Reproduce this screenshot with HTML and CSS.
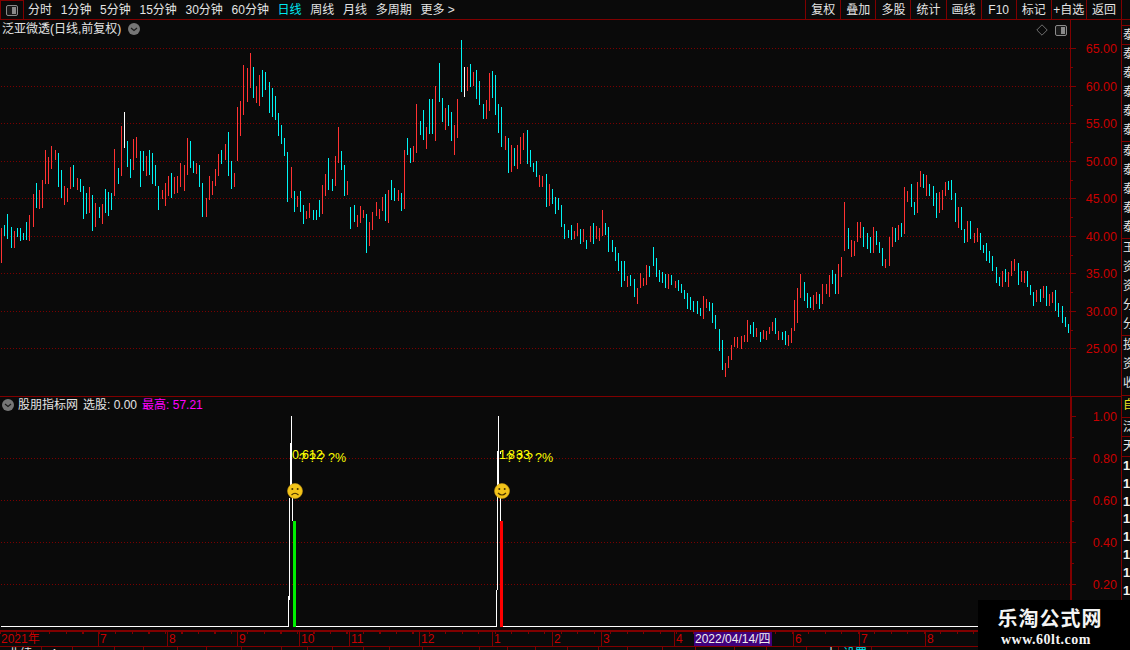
FILE: index.html
```html
<!DOCTYPE html>
<html lang="zh">
<head>
<meta charset="utf-8">
<title>泛亚微透</title>
<link rel="stylesheet" href="styles.css">
</head>
<body>
<div class="app">
  <header class="toolbar">
    <div class="layout-btn">
      <svg class="icon-panel" viewBox="0 0 12 11"><rect x="0.5" y="0.5" width="11" height="10" rx="1.5" class="panel-frame"/><rect x="6" y="2" width="4" height="7" class="panel-fill"/></svg>
    </div>
    <nav class="periods">
      <span>分时</span><span>1分钟</span><span>5分钟</span><span>15分钟</span><span>30分钟</span><span>60分钟</span><span class="active">日线</span><span>周线</span><span>月线</span><span>多周期</span><span>更多 &gt;</span>
    </nav>
    <nav class="actions">
      <span>复权</span><span>叠加</span><span>多股</span><span>统计</span><span>画线</span><span>F10</span><span>标记</span><span>+自选</span><span>返回</span>
    </nav>
    <div class="toolbar-end"></div>
  </header>

  <div class="workspace">
    <main class="charts">
      <section class="pane price-pane">
        <div class="pane-title title-price">
          <span>泛亚微透(日线,前复权)</span>
          <svg class="chevron" viewBox="0 0 12 12"><circle cx="6" cy="6" r="6"/><path d="M3 5l3 2.5L9 5"/></svg>
        </div>
        <div class="pane-tools">
          <svg class="icon-diamond" viewBox="0 0 12 12"><path d="M6 .8L11.2 6 6 11.2.8 6z"/></svg>
          <svg class="icon-panel" viewBox="0 0 12 11"><rect x="0.5" y="0.5" width="11" height="10" rx="1.5" class="panel-frame"/><rect x="6" y="2" width="4" height="7" class="panel-fill"/></svg>
        </div>
        <svg class="chart price-chart" viewBox="0 20 1121 376" shape-rendering="crispEdges">
          <g class="grid">
            <path d="M1 48.5H1070M1 86.5H1070M1 123.5H1070M1 161.5H1070M1 198.5H1070M1 236.5H1070M1 273.5H1070M1 311.5H1070M1 348.5H1070"/>
          </g>
          <path class="axis" d="M1070.5 20V396"/>
          <path class="ticks" d="M1071 48.5H1076M1071 86.5H1076M1071 123.5H1076M1071 161.5H1076M1071 198.5H1076M1071 236.5H1076M1071 273.5H1076M1071 311.5H1076M1071 348.5H1076M1071 67.5H1073M1071 105.5H1073M1071 142.5H1073M1071 180.5H1073M1071 217.5H1073M1071 255.5H1073M1071 292.5H1073M1071 330.5H1073"/>
          <g class="axis-labels">
            <text x="1117" y="53">65.00</text><text x="1117" y="91">60.00</text><text x="1117" y="128">55.00</text><text x="1117" y="166">50.00</text><text x="1117" y="203">45.00</text><text x="1117" y="241">40.00</text><text x="1117" y="278">35.00</text><text x="1117" y="316">30.00</text><text x="1117" y="353">25.00</text>
          </g>
          <g transform="translate(0.17,40) scale(.33333)">
            <path class="up" d="M4 565V668M43 573V624M88 525V603M100 462V561M118 450V507M127 420V504M136 330V432M145 351V432M154 318V387M166 330V360M193 438V495M202 444V486M211 381V447M232 414V450M268 441V519M286 489V561M307 492V552M343 327V468M364 258V408M400 297V390M409 291V354M439 348V408M487 450V477M496 429V498M505 408V468M523 411V462M532 408V459M541 369V441M553 375V453M562 294V405M589 369V402M619 474V531M628 408V480M637 423V465M646 387V438M655 342V408M676 312V360M703 399V441M712 201V363M721 183V288M730 75V225M742 84V186M751 39V144M769 138V189M778 105V198M874 381V474M892 468V501"/>
            <path class="down" d="M13 555V588M22 522V597M34 561V624M52 564V591M61 564V603M70 579V600M79 546V600M109 429V504M175 339V441M184 390V474M220 375V441M241 417V456M250 438V537M259 459V522M277 465V573M298 501V534M316 447V519M325 456V528M334 459V510M355 384V432M382 303V381M391 357V414M421 333V441M430 333V393M448 330V405M457 339V432M466 375V438M475 438V510M514 399V474M571 303V384M580 363V399M598 375V441M607 429V531M664 330V372M685 276V408M694 363V447M760 81V174M787 90V171M796 96V150M808 126V219M817 144V231M826 168V240M835 219V288M844 255V312M853 294V348M862 336V486M883 453V516"/>
            <path class="flat" d="M373 216V324"/>
          </g>
          <g transform="translate(300.17,30) scale(.33333)">
            <path class="up" d="M19 543V567M28 519V564M67 465V552M76 432V498M106 378V468M115 291V399M142 453V495M172 555V591M181 528V579M190 540V564M208 576V648M217 546V600M229 516V558M238 537V567M247 501V543M265 480V579M295 480V513M313 360V537M340 348V396M349 222V369M379 291V357M406 168V333M436 234V300M463 285V375M472 207V324M502 111V183M520 126V168M559 210V267M568 129V243M616 318V360M634 345V426M652 345V417M661 321V402M670 309V360M718 435V471M727 438V471M748 462V528M823 603V627M832 579V618M850 597V636M871 588V636M889 588V627M898 594V633"/>
            <path class="down" d="M1 483V546M10 525V582M40 540V570M49 540V570M58 510V561M85 384V480M97 447V483M124 363V420M133 405V498M151 531V597M163 525V576M199 552V669M256 492V573M274 450V510M283 474V513M304 489V543M322 324V375M331 354V399M361 273V315M370 240V330M388 207V312M397 207V312M418 99V216M427 204V276M445 225V288M454 246V333M484 30V186M511 102V171M529 120V207M538 153V225M550 222V267M577 123V204M586 135V255M595 222V309M604 231V351M625 324V429M643 354V408M682 300V402M691 360V411M700 399V426M709 393V441M739 432V531M757 477V522M766 501V552M775 504V540M784 525V591M793 582V627M805 600V624M814 585V630M841 597V642M859 630V657M880 579V642"/>
            <path class="flat" d="M493 111V201"/>
          </g>
          <g transform="translate(600.17,160) scale(.33333)">
            <path class="up" d="M7 150V228M82 348V381M112 384V432M121 339V384M130 354V378M139 315V375M205 342V387M226 363V384M310 408V477M319 417V444M376 609V651M385 588V624M394 555V600M403 531V561M412 531V564M424 528V567M433 525V546M442 480V546M469 504V531M490 510V537M499 513V540M508 501V522M517 486V513M535 513V540M565 525V558M574 504V549M583 420V513M592 384V489M601 342V414M640 405V450M649 396V432M667 372V432M679 372V402M688 345V411M715 312V402M724 291V351M733 126V273M754 240V291M763 243V288M772 186V246M781 186V234M820 201V279M856 297V324M868 231V318M877 201V261M895 195V240M913 81V222M922 93V126M952 66V159M961 33V81M979 45V108M1018 96V159M1027 90V150M1036 66V108M1075 141V204M1102 183V246M1123 219V249M1132 204V246M1207 333V381M1225 336V381M1234 303V348M1243 297V333M1264 333V366M1273 333V369M1309 390V426M1330 378V414M1348 402V438M1357 396V429"/>
            <path class="down" d="M16 189V225M25 201V276M37 240V276M46 261V303M55 279V333M64 303V381M73 303V363M91 345V378M103 357V411M148 318V351M160 261V318M169 294V351M178 330V366M187 336V369M196 342V384M214 345V375M235 360V393M244 372V399M253 390V417M262 399V447M271 411V450M280 423V456M292 423V462M301 444V468M328 426V453M337 429V489M346 465V507M358 507V573M367 540V630M451 495V522M460 486V531M481 516V546M526 474V522M547 516V540M556 513V555M613 366V423M622 399V444M631 411V444M658 402V447M697 330V372M706 342V402M745 204V267M790 201V261M802 219V267M811 231V279M829 213V255M838 246V279M847 264V318M886 204V246M904 189V231M934 72V141M943 126V165M970 42V84M988 72V108M1000 78V138M1009 99V174M1045 63V90M1054 60V120M1066 99V186M1084 141V210M1093 207V249M1111 183V237M1141 219V270M1150 255V279M1159 249V303M1168 273V309M1177 288V333M1189 321V369M1198 351V378M1216 327V366M1255 309V375M1282 333V381M1291 375V405M1300 396V438M1321 387V426M1339 378V438M1366 390V453M1375 429V471M1387 438V489M1396 471V501M1405 492V519"/>
          </g>
        </svg>
      </section>

      <section class="pane indicator-pane">
        <div class="pane-title title-indicator">
          <svg class="chevron" viewBox="0 0 12 12"><circle cx="6" cy="6" r="6"/><path d="M3 5l3 2.5L9 5"/></svg>
          <span class="name">股朋指标网</span>
          <span class="pick">选股: 0.00</span>
          <span class="high">最高: 57.21</span>
        </div>
        <svg class="chart indicator-chart" viewBox="0 397 1121 233" shape-rendering="crispEdges">
          <g class="grid">
            <path d="M1 458.5H1070M1 500.5H1070M1 542.5H1070M1 584.5H1070"/>
          </g>
          <path class="axis axis-wide" d="M1071 397V630"/>
          <path class="ticks" d="M1072 416.5H1076M1072 458.5H1076M1072 500.5H1076M1072 542.5H1076M1072 584.5H1076M1072 437.5H1074M1072 479.5H1074M1072 521.5H1074M1072 563.5H1074"/>
          <g class="axis-labels">
            <text x="1117" y="421">1.00</text><text x="1117" y="463">0.80</text><text x="1117" y="505">0.60</text><text x="1117" y="547">0.40</text><text x="1117" y="589">0.20</text>
          </g>
          <path class="trace" d="M1 626.5H288M296 626.5H496M503 626.5H978M291.5 416V490M290.5 443V490M292.5 498V521M289.5 498V600M288.5 596V627M498.5 416V490M497.5 451V590M500.5 451V454M500.5 498V521M496.5 590V627"/>
          <rect class="bar-green" x="293" y="521" width="3" height="106"/>
          <rect class="bar-red" x="500" y="521" width="3" height="106"/>
          <g class="signal">
            <text x="292 298 302 309 316" y="459">0.612</text>
            <text x="299 309 318 328 335" y="462">????%</text>
            <text x="499 505 508 516 523" y="459">1.833</text>
            <text x="506 516 526 535 542" y="462">????%</text>
          </g>
          <g shape-rendering="auto">
            <circle class="face" cx="295" cy="491" r="7.5"/>
            <circle class="eye" cx="292.3" cy="489" r="1"/><circle class="eye" cx="297.7" cy="489" r="1"/>
            <path class="mouth" d="M291.5 495q3.5-3.5 7 0"/>
            <circle class="face" cx="502" cy="491" r="7.5"/>
            <circle class="eye" cx="499.3" cy="489" r="1"/><circle class="eye" cx="504.7" cy="489" r="1"/>
            <path class="mouth" d="M498 493q4 4 8 0"/>
          </g>
        </svg>
      </section>

      <div class="time-axis">
        <span style="width:98px">2021年</span>
        <span class="mark" style="width:69px">7</span>
        <span class="mark" style="width:70px">8</span>
        <span class="mark" style="width:62px">9</span>
        <span class="mark" style="width:50px">10</span>
        <span class="mark" style="width:70px">11</span>
        <span class="mark" style="width:73px">12</span>
        <span class="mark" style="width:60px">1</span>
        <span class="mark" style="width:49px">2</span>
        <span class="mark" style="width:73px">3</span>
        <span class="mark" style="width:20px">4</span>
        <span class="cursor-date" style="width:78px">2022/04/14/四</span>
        <span style="width:21px"></span>
        <span class="mark" style="width:66px">6</span>
        <span class="mark" style="width:66px">7</span>
        <span class="mark" style="width:196px">8</span>
      </div>
    </main>

    <aside class="strip">
      <div class="cell"></div>
      <div class="cell"><p class="glyphs">泰</p></div>
      <div class="cell"><p class="glyphs">泰泰泰泰泰</p></div>
      <div class="cell"><p class="glyphs">泰泰泰泰泰</p></div>
      <div class="cell"><p class="glyphs">玉资资分分</p></div>
      <div class="cell"><p class="glyphs">投资收</p></div>
      <div class="cell"><p class="glyphs first-pick">自</p></div>
      <div class="cell"><p class="glyphs">泛</p></div>
      <div class="cell"><p class="glyphs">天</p></div>
      <div class="cell last"><p class="ones">11111111111</p></div>
    </aside>
  </div>

  <footer class="tabs">
    <span class="tab" style="width:42px">业绩</span><span class="tab" style="width:31px">4</span><span class="tab" style="width:42px"></span><span class="tab" style="width:29px"></span><span class="tab" style="width:34px"></span><span class="tab" style="width:29px"></span><span class="tab" style="width:35px"></span><span class="tab" style="width:40px"></span><span class="tab" style="width:26px"></span><span class="tab" style="width:25px"></span><span class="tab" style="width:31px"></span><span class="tab" style="width:26px"></span><span class="tab" style="width:33px"></span><span class="tab" style="width:57px"></span><span class="tab" style="width:28px"></span><span class="tab" style="width:28px"></span><span class="tab" style="width:32px"></span><span class="tab" style="width:31px"></span><span class="tab" style="width:29px"></span><span class="tab" style="width:35px"></span><span class="tab" style="width:33px"></span><span class="tab" style="width:39px"></span><span class="tab" style="width:32px"></span><span class="tab" style="width:40px"></span><span class="tab tab-end" style="width:32px">十</span><span class="tab tab-cyan" style="width:33px">设置</span>
  </footer>

  <aside class="watermark">
    <div class="wm-title">乐淘公式网</div>
    <div class="wm-url">www.60lt.com</div>
  </aside>
</div>
</body>
</html>
```

FILE: styles.css
```css
* { box-sizing: border-box; margin: 0; padding: 0; }

html, body {
  width: 1130px;
  height: 650px;
  overflow: hidden;
  background: #0a0a0a;
}

.app {
  position: relative;
  display: flex;
  flex-direction: column;
  width: 1130px;
  height: 650px;
  overflow: hidden;
  background: #0a0a0a;
  color: #e4e4e4;
  font: 12px/19px "Liberation Sans", "Noto Sans CJK SC", sans-serif;
}

/* toolbar */
.toolbar {
  display: flex;
  flex: 0 0 20px;
  height: 20px;
  border-bottom: 1px solid #800000;
  white-space: nowrap;
  line-height: 18px;
}

.layout-btn {
  display: flex;
  align-items: center;
  justify-content: center;
  width: 24px;
  border: 1px solid #800000;
  border-bottom: 0;
}

.icon-panel { width: 12px; height: 11px; display: block; }
.panel-frame { fill: #1a1a1a; stroke: #8a8a8a; }
.panel-fill { fill: #8a8a8a; }

.periods {
  display: flex;
  gap: 8.7px;
  padding: 1px 0 0 4px;
}

.periods .active { color: #00e8f0; }

.actions {
  display: grid;
  grid-template-columns: repeat(9, 35.1px);
  margin-left: auto;
  text-align: center;
}

.actions span {
  border-left: 1px solid #800000;
  padding-top: 1px;
}

.toolbar-end {
  width: 9px;
  border-left: 1px solid #800000;
}

/* work area */
.workspace {
  display: flex;
  flex: 1 1 auto;
  min-height: 0;
}

.charts {
  display: flex;
  flex-direction: column;
  width: 1121px;
}

.pane { position: relative; }
.price-pane { height: 377px; border-bottom: 1px solid #800000; }
.indicator-pane { height: 233px; }

.chart { display: block; width: 1121px; }
.price-chart { height: 376px; }
.indicator-chart { height: 233px; }

.pane-title {
  position: absolute;
  display: flex;
  align-items: center;
  white-space: nowrap;
  line-height: 16px;
}

.title-price { left: 2px; top: 1px; gap: 7px; }
.title-indicator { left: 2px; top: 0; }

.title-indicator .name { margin-left: 4px; }
.title-indicator .pick { margin-left: 5px; }
.title-indicator .high { margin-left: 5px; color: #ff00ff; }

.chevron { width: 12px; height: 12px; flex: none; }
.chevron circle { fill: #767676; }
.chevron path { fill: none; stroke: #1c1c1c; stroke-width: 1.2; }

.pane-tools {
  position: absolute;
  left: 1036px;
  top: 4px;
  display: flex;
  align-items: center;
  gap: 7px;
}

.icon-diamond { width: 12px; height: 12px; }
.icon-diamond path { fill: none; stroke: #6e6e6e; }

/* chart parts */
.grid path {
  fill: none;
  stroke: #7a0000;
  stroke-dasharray: 1 2;
  shape-rendering: geometricPrecision;
}

.axis { stroke: #800000; fill: none; }
.axis-wide { stroke-width: 2; }
.ticks { stroke: #800000; fill: none; }

.axis-labels text {
  fill: #c80000;
  font: 12.5px "Liberation Sans", sans-serif;
  text-anchor: end;
  shape-rendering: auto;
}

.up, .down, .flat { fill: none; stroke-width: 3; }
.up { stroke: #ff3232; }
.down { stroke: #00f4f4; }
.flat { stroke: #ffffff; }

.trace { fill: none; stroke: #ffffff; }
.bar-green { fill: #00ee00; }
.bar-red { fill: #ff0000; }

.signal text {
  fill: #ffff00;
  font: 12.5px "Liberation Sans", sans-serif;
}

.face { fill: #f2c41a; stroke: #c99a10; stroke-width: .6; }
.eye { fill: #4a3500; }
.mouth { fill: none; stroke: #4a3500; stroke-width: 1.1; }

/* time axis */
.time-axis {
  display: flex;
  flex: 0 0 17px;
  height: 17px;
  border-top: 2px solid #800000;
  border-bottom: 1px solid #800000;
  color: #c80000;
  line-height: 15px;
  font-size: 12px;
  background: repeating-linear-gradient(to right, #800000 0 1px, transparent 1px 16.5px) 0 0 / 100% 2px no-repeat;
}

.time-axis span {
  flex: none;
  padding-left: 1px;
  white-space: nowrap;
}

.time-axis .mark { border-left: 1px solid #800000; }

.time-axis .cursor-date {
  padding-left: 1px;
  background: #40007c;
  color: #f0f0f0;
  font-size: 12px;
}

/* right strip */
.strip {
  display: grid;
  grid-template-rows: 6px 19px 97px 97px 97px 60px 22px 19px 20px 1fr;
  width: 9px;
  border-left: 1px solid #800000;
  overflow: hidden;
}

.cell {
  overflow: hidden;
  border-bottom: 1px solid #800000;
  padding-left: 1px;
}

.cell.last { border-bottom: 0; }

.glyphs {
  width: 12px;
  line-height: 19px;
  font-size: 12px;
  word-break: break-all;
}

.first-pick { color: #e8e020; }

.ones {
  width: 10px;
  line-height: 17.8px;
  font-size: 13px;
  font-weight: bold;
  color: #f4f4f4;
  word-break: break-all;
}

/* bottom tabs */
.tabs {
  display: flex;
  flex: 0 0 3px;
  overflow: hidden;
}

.tab {
  flex: none;
  height: 3px;
  overflow: hidden;
  border-right: 1px solid #800000;
  padding-left: 8px;
  line-height: 14px;
  white-space: nowrap;
  color: #e4e4e4;
}

.tab-end { padding-left: 18px; }
.tab-cyan { color: #00e8f0; padding-left: 4px; }

/* watermark */
.watermark {
  position: absolute;
  right: 0;
  bottom: 0;
  width: 152px;
  height: 50px;
  background: #000;
  text-align: center;
  color: #f4f4f4;
  font-weight: bold;
}

.wm-title {
  margin-top: 6px;
  padding-right: 8px;
  font: bold 20px/24px "Noto Sans CJK SC", sans-serif;
  letter-spacing: 1px;
}

.wm-url {
  margin-top: 3px;
  padding-right: 16px;
  font: bold 14px/14px "Liberation Serif", serif;
  letter-spacing: .5px;
}
```
